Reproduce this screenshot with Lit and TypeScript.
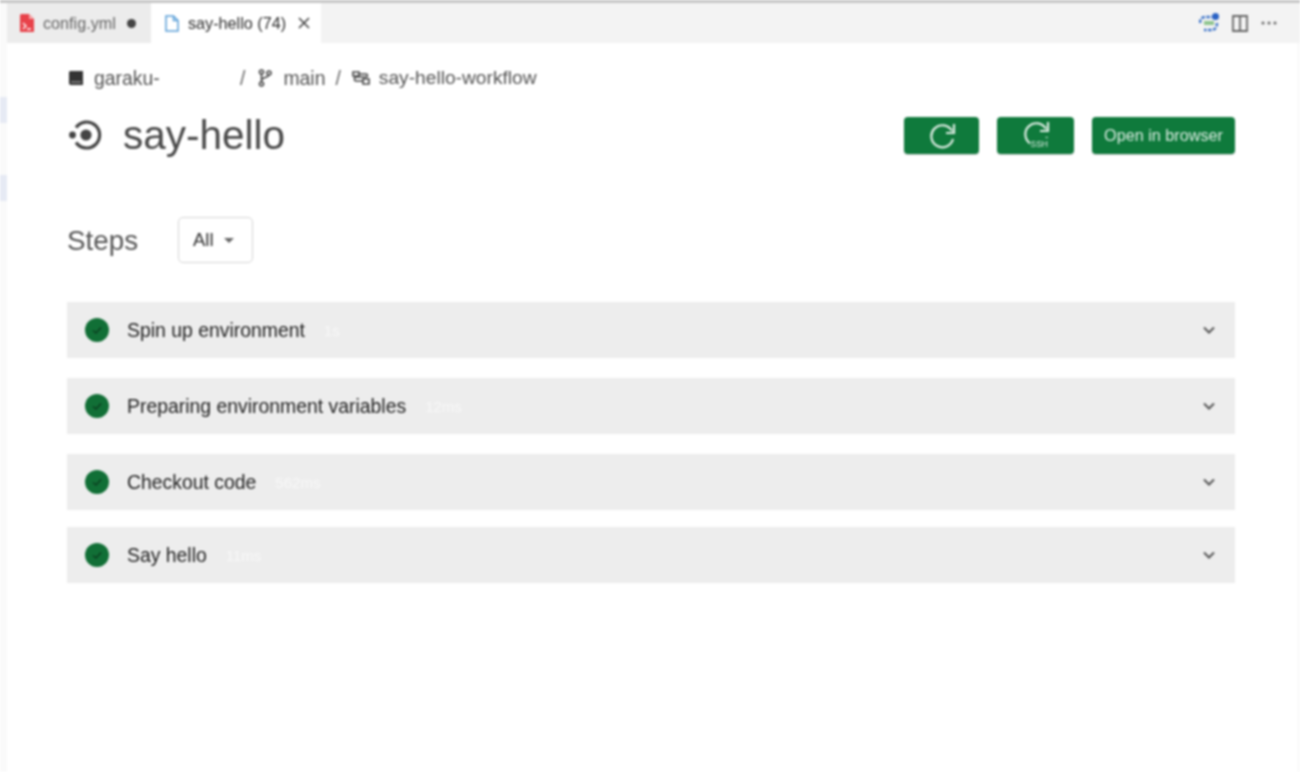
import { LitElement, html, css, svg } from "lit";
import { customElement } from "lit/decorators.js";

const steps = [
  { name: "Spin up environment", time: "1s" },
  { name: "Preparing environment variables", time: "12ms" },
  { name: "Checkout code", time: "562ms" },
  { name: "Say hello", time: "11ms" },
];

const refresh = svg`<path d="M24 10A11 11 0 1 0 25 18" fill="none" stroke="currentColor" stroke-width="2.2"/><path d="M18 12H26V3" fill="none" stroke="currentColor" stroke-width="2.2"/>`;

@customElement("app-root")
export class AppRoot extends LitElement {
  static styles = css`
    :host { display: block; width: 1300px; height: 772px; overflow: hidden; background: #fff; }
    .frame { height: 772px; display: flex; flex-direction: column; font-family: "Liberation Sans", Arial, sans-serif; color: #555; filter: blur(1.1px); background: #fff; }
    .topline { height: 3px; flex: none; background: #c6c6c6; }
    .body { flex: 1; display: flex; min-height: 0; }
    .rail { width: 7px; flex: none; background: #fafafa; display: flex; flex-direction: column; }
    .mark { height: 26px; background: #e6eaf4; }
    .mark.one { margin-top: 94px; }
    .mark.two { margin-top: 52px; }
    .main { flex: 1; display: flex; flex-direction: column; min-width: 0; }
    .tabbar { height: 40px; flex: none; background: #f3f3f3; display: flex; align-items: stretch; }
    .tab { display: flex; align-items: center; font-size: 16.2px; white-space: nowrap; box-sizing: border-box; }
    .tab.off { width: 144px; background: #ececec; color: #666; padding-left: 13px; }
    .tab.on { width: 170px; background: #fff; color: #2e2e2e; padding-left: 14px; }
    .tab .label { margin-left: 9px; }
    .dot { width: 9px; height: 9px; border-radius: 50%; background: #444; margin-left: 11px; }
    .close { margin-left: 12px; color: #444; display: flex; }
    .actions { margin-left: auto; display: flex; align-items: center; gap: 13px; padding-right: 23px; color: #777; }
    .content { flex: 1; display: flex; flex-direction: column; padding: 23px 62px 0 60px; border-right: 3px solid #fbfbfb; }
    .crumbs { height: 24px; display: flex; align-items: center; font-size: 19.4px; color: #555; white-space: nowrap; }
    .crumbs svg { flex: none; }
    .repo { margin-left: 10px; width: 146px; }
    .sep { color: #666; }
    .branch { margin: 0 11px 0 13px; }
    .main-name { margin-right: 10px; }
    .wf { margin: 0 9px 0 11px; }
    .wf-name { font-size: 19.2px; }
    .head { height: 50px; margin-top: 20px; display: flex; align-items: center; }
    .head h1 { margin: 0 0 0 21px; font-size: 40.5px; font-weight: 400; color: #4a4a4a; line-height: 50px; }
    .title-icon { margin-left: 1px; color: #444; }
    .btns { margin-left: auto; display: flex; gap: 18px; }
    .btn { height: 37px; border-radius: 4px; background: #0f7a3c; color: #dcece2; border: 0; padding: 0; display: flex; align-items: center; justify-content: center; font: inherit; box-shadow: 0 1px 1px #ccc; }
    .btn.icon { width: 75px; }
    .btn.icon2 { width: 77px; }
    .btn.text { width: 143px; font-size: 16.2px; }
    .filter { height: 46px; margin-top: 57px; display: flex; align-items: center; }
    .filter h2 { margin: 0; padding-top: 2px; width: 111px; font-size: 27.8px; font-weight: 400; color: #555; }
    .select { width: 75px; height: 46px; box-sizing: border-box; border: 1.5px solid #d4d4d4; border-radius: 5px; display: flex; align-items: center; padding-left: 14px; font-size: 18.5px; color: #2a2a2a; background: #fff; }
    .caret { margin-left: 10px; width: 0; height: 0; border: 5px solid transparent; border-top: 5px solid #666; border-bottom: 0; }
    .rows { margin-top: 39px; display: flex; flex-direction: column; gap: 20px; }
    .row { height: 56px; background: #ededed; display: flex; align-items: center; padding: 0 20px 0 18px; font-size: 19.4px; color: #1e1e1e; }
    .row:last-child { margin-top: -3px; }
    .name { margin-left: 18px; padding-top: 1px; }
    .time { margin-left: 19px; color: #f8f8f8; font-size: 15px; }
    .ok { flex: none; }
    .chev { margin-left: auto; flex: none; color: #555; }
  `;

  render() {
    return html`<div class="frame">
      <div class="topline"></div>
      <div class="body">
        <div class="rail"><div class="mark one"></div><div class="mark two"></div></div>
        <div class="main">
          <div class="tabbar">
            <div class="tab off">
              <svg width="14" height="18" viewBox="0 0 14 18"><path d="M1 0H9L14 5V18H0V1Z" fill="#e8424a"/><path d="M9 0V5H14" fill="#f7a5a8"/><path d="M3 9 L6 12 L3 15 M7 15 H11" fill="none" stroke="#fff" stroke-width="1.4"/></svg>
              <span class="label">config.yml</span><span class="dot"></span>
            </div>
            <div class="tab on">
              <svg width="14" height="17" viewBox="0 0 14 17"><path d="M1 1H8.5L13 5.5V16H1Z M8.5 1V5.5H13" fill="none" stroke="#5a9fd8" stroke-width="1.5"/></svg>
              <span class="label">say-hello (74)</span>
              <span class="close"><svg width="12" height="12" viewBox="0 0 12 12"><path d="M1 1L11 11M11 1L1 11" stroke="currentColor" stroke-width="1.6"/></svg></span>
            </div>
            <div class="actions">
              <svg width="20" height="20" viewBox="0 0 20 20"><path d="M1 10C1 5 4 4 7 4H13M18 10C18 16 15 17 12 17H5" fill="none" stroke="#3a72c8" stroke-width="2.4" stroke-dasharray="3.5 1.5"/><rect x="5" y="8" width="10" height="4" fill="#8fc48f"/><circle cx="16.5" cy="3.5" r="3.5" fill="#2a62c4"/></svg>
              <svg width="16" height="17" viewBox="0 0 16 17"><path d="M1 1H15V16H1Z M8 1V16" fill="none" stroke="#666" stroke-width="1.8"/></svg>
              <svg width="16" height="4" viewBox="0 0 16 4"><circle cx="2" cy="2" r="1.5" fill="#666"/><circle cx="8" cy="2" r="1.5" fill="#666"/><circle cx="14" cy="2" r="1.5" fill="#666"/></svg>
            </div>
          </div>
          <div class="content">
            <div class="crumbs">
              <svg width="17" height="16" viewBox="0 0 17 16"><path d="M3 1H16V15H4C2.5 15 2 14 2 13V2Z" fill="#333"/><path d="M4 12H14" stroke="#bbb" stroke-width="1"/></svg>
              <span class="repo">garaku-</span><span class="sep">/</span>
              <svg class="branch" width="14" height="18" viewBox="0 0 14 18" fill="none" stroke="#444" stroke-width="1.6"><circle cx="3.5" cy="3" r="2"/><circle cx="11" cy="4" r="2"/><circle cx="3.5" cy="15" r="2"/><path d="M3.5 5V13M3.5 11C4 8 10 9 11 6"/></svg>
              <span class="main-name">main</span><span class="sep">/</span>
              <svg class="wf" width="18" height="16" viewBox="0 0 18 16" fill="none" stroke="#444" stroke-width="1.6"><path d="M1 2H7V6H1Z M11 9H17V14H11Z M7 4H14C16 4 16 7 14 7H4C2 7 2 11 4 11H11"/></svg>
              <span class="wf-name">say-hello-workflow</span>
            </div>
            <div class="head">
              <svg class="title-icon" width="34" height="32" viewBox="0 0 34 32"><circle cx="4.5" cy="16" r="3.4" fill="currentColor"/><circle cx="18" cy="16" r="5.6" fill="currentColor"/><path d="M8 8.5A13 13 0 1 1 8 23.5" fill="none" stroke="currentColor" stroke-width="3.2"/></svg>
              <h1>say-hello</h1>
              <div class="btns">
                <button class="btn icon"><svg width="28" height="28" viewBox="0 0 28 28">${refresh}</svg></button>
                <button class="btn icon2"><svg width="30" height="30" viewBox="0 0 30 30"><g transform="translate(1 -1)">${refresh}</g><rect x="9" y="18" width="18" height="11" fill="#0f7a3c"/><text x="9.5" y="27" font-size="8.5" fill="currentColor" font-family="Liberation Sans">SSH</text></svg></button>
                <button class="btn text">Open in browser</button>
              </div>
            </div>
            <div class="filter">
              <h2>Steps</h2>
              <div class="select">All<span class="caret"></span></div>
            </div>
            <div class="rows">
              ${steps.map(
                (s) => html`<div class="row">
                  <svg class="ok" width="24" height="24" viewBox="0 0 24 24"><circle cx="12" cy="12" r="12" fill="#116f36"/><path d="M8 12.5L11 15L16 9.5" fill="none" stroke="#0b3d1f" stroke-width="1.4"/></svg>
                  <span class="name">${s.name}</span><span class="time">${s.time}</span>
                  <svg class="chev" width="12" height="8" viewBox="0 0 12 8"><path d="M1 1.5L6 6.5L11 1.5" fill="none" stroke="currentColor" stroke-width="2"/></svg>
                </div>`
              )}
            </div>
          </div>
        </div>
      </div>
    </div>`;
  }
}
